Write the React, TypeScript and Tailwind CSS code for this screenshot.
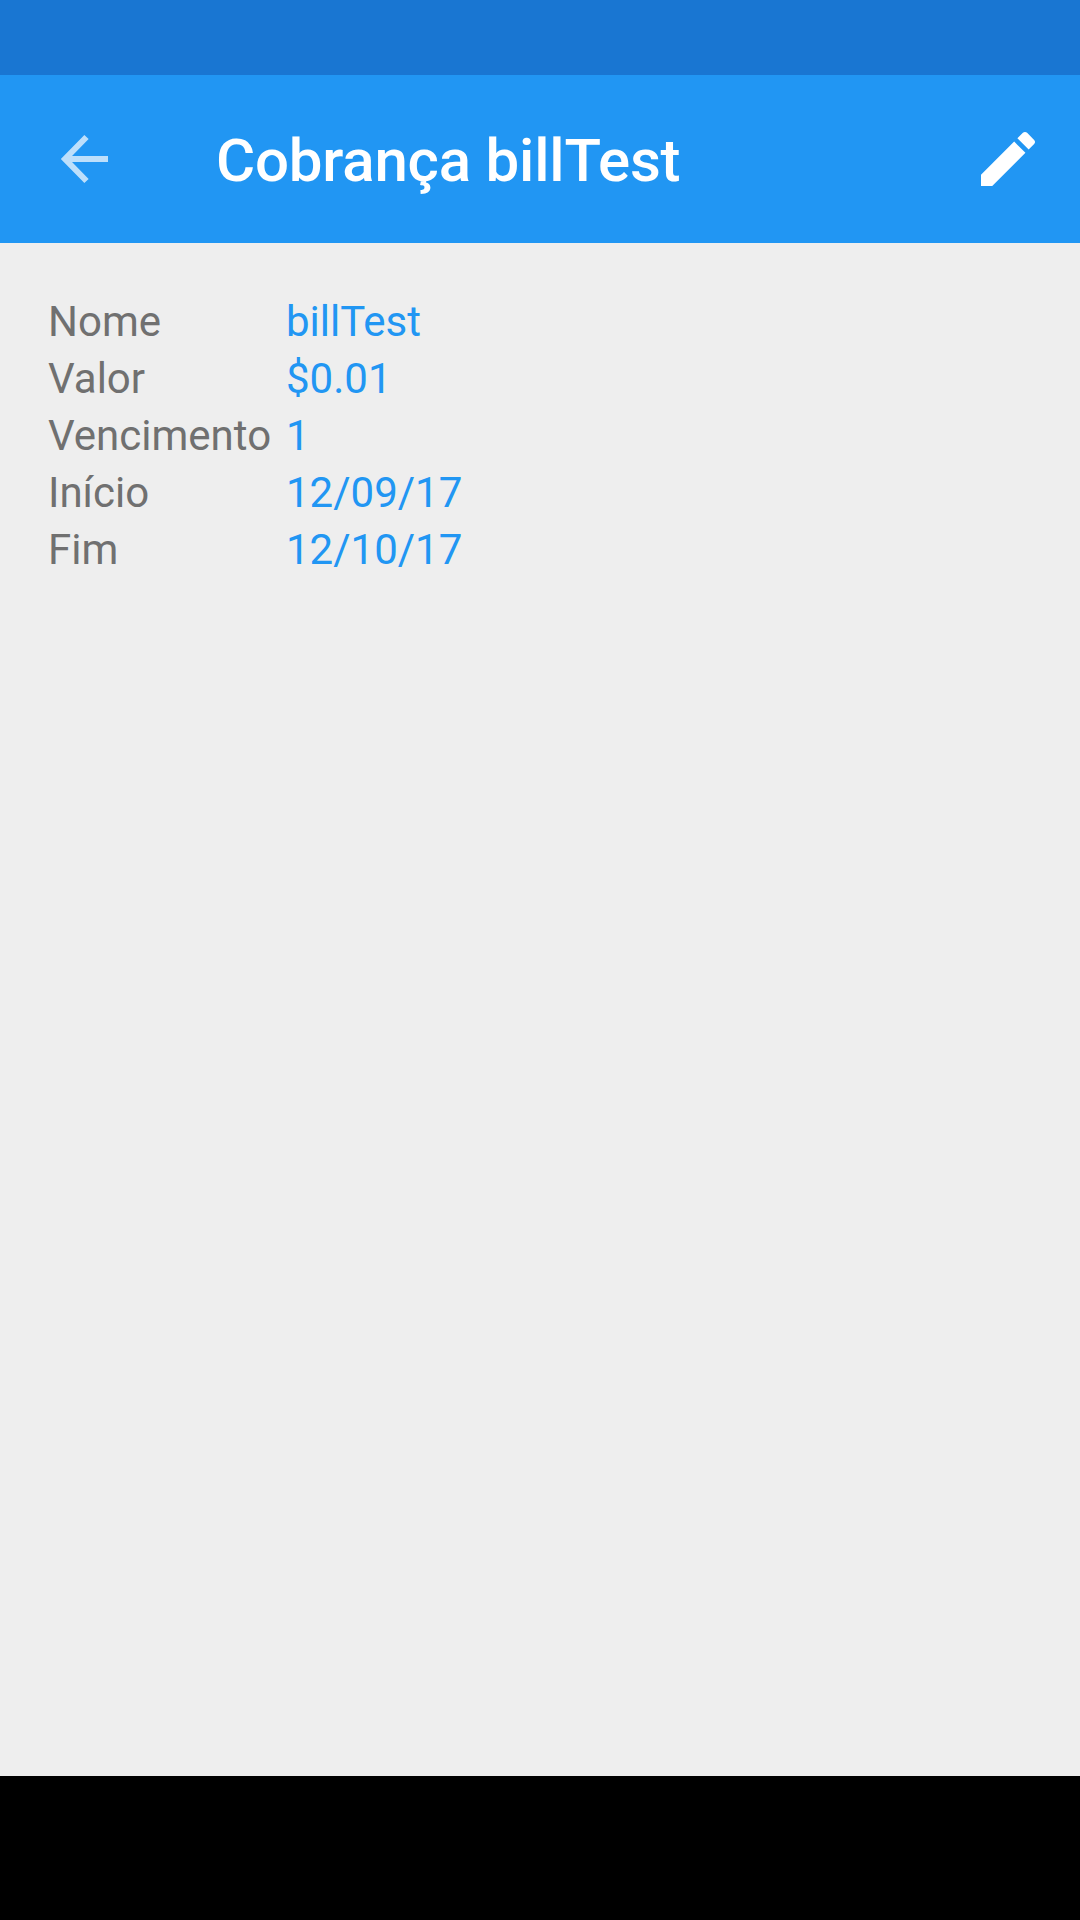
import React from "react";

const rows = [
  { label: "Nome", value: "billTest" },
  { label: "Valor", value: "$0.01" },
  { label: "Vencimento", value: "1" },
  { label: "Início", value: "12/09/17" },
  { label: "Fim", value: "12/10/17" },
];

export default function App() {
  return (
    <div className="flex h-[1920px] w-[1080px] flex-col bg-[#eeeeee] font-['Roboto',sans-serif]">
      <div className="h-[75px] bg-[#1976d2]" />
      <header className="flex h-[168px] items-center justify-between bg-[#2196f3] pl-[54px] pr-[36px]">
        <div className="flex items-center">
          <svg width="60" height="60" viewBox="0 0 60 60" fill="none" className="opacity-70">
            <path d="M11 30H54M32.5 8L11 30L32.5 52" stroke="#fff" strokeWidth="6" />
          </svg>
          <h1 className="ml-[102px] mt-[4px] text-[60px] font-medium leading-none tracking-[-0.2px] text-white">Cobrança billTest</h1>
        </div>
        <svg width="72" height="72" viewBox="0 0 24 24" fill="#fff">
          <path d="M3 17.25V21h3.75L17.81 9.94l-3.75-3.75L3 17.25zM20.71 7.04c.39-.39.39-1.02 0-1.41l-2.34-2.34c-.39-.39-1.02-.39-1.41 0l-1.83 1.83 3.75 3.75 1.83-1.83z" />
        </svg>
      </header>
      <main className="flex-1 px-[48px] pt-[50px]">
        <div className="grid grid-cols-[238px_1fr] text-[42px] leading-[57px]">
          {rows.map((row) => (
            <React.Fragment key={row.label}>
              <span className="text-[#707070]">{row.label}</span>
              <span className="text-[#2196f3]">{row.value}</span>
            </React.Fragment>
          ))}
        </div>
      </main>
      <div className="h-[144px] bg-black" />
    </div>
  );
}
